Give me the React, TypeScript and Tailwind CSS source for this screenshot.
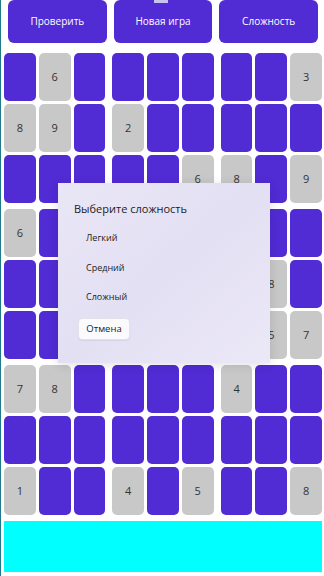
import React from "react";

const G = [
  [0, 6, 0, 0, 0, 0, 0, 0, 3],
  [8, 9, 0, 2, 0, 0, 0, 0, 0],
  [0, 0, 0, 0, 0, 6, 8, 0, 9],
  [6, 0, 0, 0, 0, 0, 0, 0, 0],
  [0, 0, 0, 0, 0, 0, 0, 8, 0],
  [0, 0, 0, 0, 0, 0, 0, 5, 7],
  [7, 8, 0, 0, 0, 0, 4, 0, 0],
  [0, 0, 0, 0, 0, 0, 0, 0, 0],
  [1, 0, 0, 4, 0, 5, 0, 0, 8],
];

function Box({ br, bc }: { br: number; bc: number }) {
  const cells: React.ReactNode[] = [];
  for (let r = 0; r < 3; r++) {
    for (let c = 0; c < 3; c++) {
      const v = G[br * 3 + r][bc * 3 + c];
      cells.push(
        v ? (
          <div
            key={`${r}-${c}`}
            className="h-[48px] rounded-[5px] bg-[#c8c8c8] flex items-center justify-center text-[11px] text-[#333333]"
          >
            {v}
          </div>
        ) : (
          <div key={`${r}-${c}`} className="h-[48px] rounded-[5px] bg-[#512bd4]" />
        )
      );
    }
  }
  return <div className="grid grid-cols-3 gap-[3px]">{cells}</div>;
}

export default function App() {
  const boxes: React.ReactNode[] = [];
  for (let br = 0; br < 3; br++)
    for (let bc = 0; bc < 3; bc++) boxes.push(<Box key={`${br}${bc}`} br={br} bc={bc} />);

  return (
    <div
      className="relative w-[324px] h-[576px] bg-white overflow-hidden border-l border-[#1f7a8c] flex flex-col"
      style={{ fontFamily: '"Open Sans", "Noto Sans", sans-serif' }}
    >
      <div className="flex gap-[7px] pl-[7px] pr-[6px] h-[43px]">
        {["Проверить", "Новая игра", "Сложность"].map((t) => (
          <div
            key={t}
            className="flex-1 rounded-[6px] bg-[#512bd4] text-white text-[10px] flex items-center justify-center"
          >
            {t}
          </div>
        ))}
      </div>
      <div className="absolute left-[153px] top-0 w-[14px] h-[3px] bg-[#c9c3f0]" />

      <div className="mt-[10px] pl-[3px] pr-[2px] grid grid-cols-3 gap-x-[7px] gap-y-[6px]">
        {boxes}
      </div>

      <div className="mt-[6px] ml-[3px] mr-[2px] h-[51px] bg-[#00ffff]" />

      <div className="absolute left-[57px] top-[183px] w-[212px] h-[180px] bg-gradient-to-br from-[#e9e6f6] via-[#e4e0f4] to-[#ebe8f7] shadow-[0_2px_10px_rgba(0,0,0,0.12)] flex flex-col text-[#1b1b1b]">
        <div className="pl-[16px] pt-[16px] text-[11px] leading-[20px]">Выберите сложность</div>
        <div className="pl-[28px] mt-[11px] text-[9px] leading-[16px]">Легкий</div>
        <div className="pl-[28px] mt-[14px] text-[9px] leading-[16px]">Средний</div>
        <div className="pl-[28px] mt-[13px] text-[9px] leading-[16px]">Сложный</div>
        <div className="ml-[20px] mt-[13px] w-[52px] h-[22px] rounded-[4px] bg-[#fbfbfd] border border-[#e2e0ea] shadow-[0_1px_1px_rgba(0,0,0,0.06)] text-[9.5px] flex items-center justify-center">
          Отмена
        </div>
      </div>
    </div>
  );
}
